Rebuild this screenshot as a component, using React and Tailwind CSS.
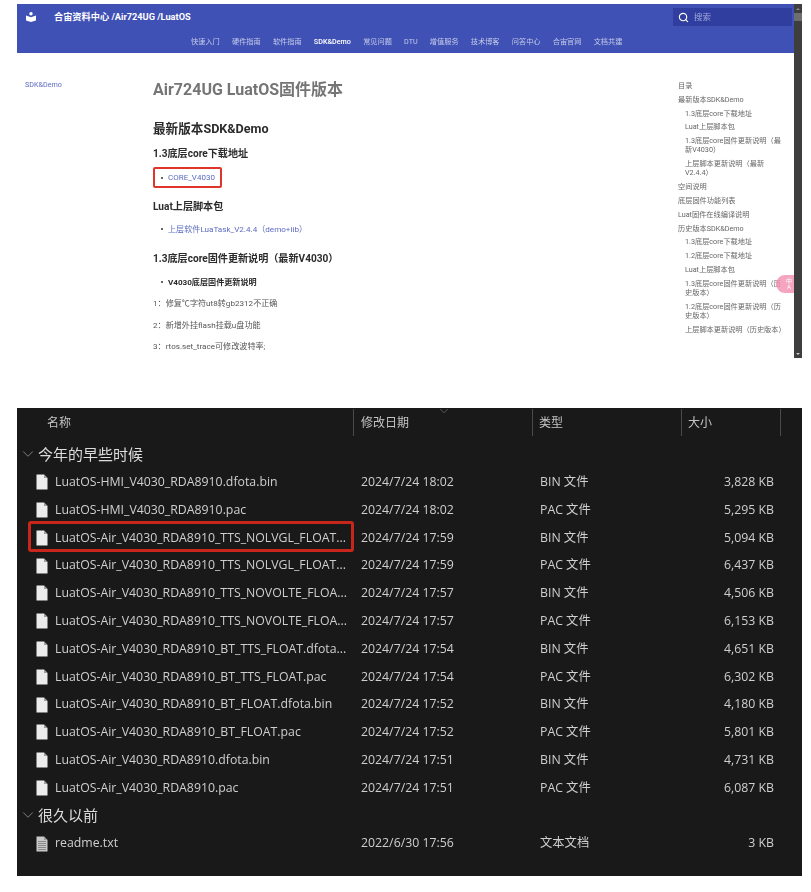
import React from 'react';
import { Search, ChevronDown } from 'lucide-react';

const webFont = "font-['Roboto','Noto_Sans_CJK_SC',sans-serif]";
const fileFont = "font-['Open_Sans','Noto_Sans_CJK_SC',sans-serif]";

const navItems = ['快速入门', '硬件指南', '软件指南', 'SDK&Demo', '常见问题', 'DTU', '增值服务', '技术博客', '问答中心', '合宙官网', '文档共建'];

const tocItems = [
  { text: '目录' },
  { text: '最新版本SDK&Demo' },
  { text: '1.3底层core下载地址', sub: true },
  { text: 'Luat上层脚本包', sub: true },
  { text: '1.3底层core固件更新说明（最新V4030）', sub: true },
  { text: '上层脚本更新说明（最新V2.4.4）', sub: true },
  { text: '空间说明' },
  { text: '底层固件功能列表' },
  { text: 'Luat固件在线编译说明' },
  { text: '历史版本SDK&Demo' },
  { text: '1.3底层core下载地址', sub: true },
  { text: '1.2底层core下载地址', sub: true },
  { text: 'Luat上层脚本包', sub: true },
  { text: '1.3底层core固件更新说明（历史版本）', sub: true },
  { text: '1.2底层core固件更新说明（历史版本）', sub: true },
  { text: '上层脚本更新说明（历史版本）', sub: true },
];

const recentFiles = [
  ['LuatOS-HMI_V4030_RDA8910.dfota.bin', '2024/7/24 18:02', 'BIN 文件', '3,828 KB'],
  ['LuatOS-HMI_V4030_RDA8910.pac', '2024/7/24 18:02', 'PAC 文件', '5,295 KB'],
  ['LuatOS-Air_V4030_RDA8910_TTS_NOLVGL_FLOAT...', '2024/7/24 17:59', 'BIN 文件', '5,094 KB', true],
  ['LuatOS-Air_V4030_RDA8910_TTS_NOLVGL_FLOAT...', '2024/7/24 17:59', 'PAC 文件', '6,437 KB'],
  ['LuatOS-Air_V4030_RDA8910_TTS_NOVOLTE_FLOA...', '2024/7/24 17:57', 'BIN 文件', '4,506 KB'],
  ['LuatOS-Air_V4030_RDA8910_TTS_NOVOLTE_FLOA...', '2024/7/24 17:57', 'PAC 文件', '6,153 KB'],
  ['LuatOS-Air_V4030_RDA8910_BT_TTS_FLOAT.dfota...', '2024/7/24 17:54', 'BIN 文件', '4,651 KB'],
  ['LuatOS-Air_V4030_RDA8910_BT_TTS_FLOAT.pac', '2024/7/24 17:54', 'PAC 文件', '6,302 KB'],
  ['LuatOS-Air_V4030_RDA8910_BT_FLOAT.dfota.bin', '2024/7/24 17:52', 'BIN 文件', '4,180 KB'],
  ['LuatOS-Air_V4030_RDA8910_BT_FLOAT.pac', '2024/7/24 17:52', 'PAC 文件', '5,801 KB'],
  ['LuatOS-Air_V4030_RDA8910.dfota.bin', '2024/7/24 17:51', 'BIN 文件', '4,731 KB'],
  ['LuatOS-Air_V4030_RDA8910.pac', '2024/7/24 17:51', 'PAC 文件', '6,087 KB'],
];

const FileIcon = ({ lines }) => (
  <svg width="12" height="16" viewBox="0 0 12 16" className="shrink-0">
    <path d="M0.5 0.5H8L11.5 4V15.5H0.5Z" fill={lines ? '#c9c9c9' : '#ececec'} />
    <path d="M8 0.5V4H11.5Z" fill="#9a9a9a" />
    {lines && <path d="M2 5.5H10M2 7.5H10M2 9.5H10M2 11.5H10M2 13.5H10" stroke="#777" strokeWidth="0.8" />}
  </svg>
);

const LogoIcon = () => (
  <svg width="10" height="10" viewBox="0 0 10 10">
    <circle cx="5" cy="1.8" r="1.7" fill="#fff" />
    <path d="M0 3.4L5 5.2L10 3.4V8.4L5 10L0 8.4Z" fill="#fff" />
  </svg>
);

const FileRow = ({ file }) => (
  <div className="relative flex items-center h-[27.8px] pt-[1px]">
    <div className="flex items-center gap-[7px] w-[344px] pl-[19px]">
      <FileIcon lines={file[0].endsWith('.txt')} />
      <span className="whitespace-nowrap">{file[0]}</span>
    </div>
    <span className="w-[179px] whitespace-nowrap">{file[1]}</span>
    <span className="w-[100px] whitespace-nowrap">{file[2]}</span>
    <span className="w-[134px] text-right whitespace-nowrap">{file[3]}</span>
    {file[4] && (
      <div className="absolute left-[11px] top-[-2.4px] w-[326px] h-[31px] border-[3px] border-[#c9261b] rounded-[3px]" />
    )}
  </div>
);

const GroupTitle = ({ children }) => (
  <div className="flex items-center h-[27.8px] pl-[2px] gap-[1px] text-[15px] text-[#dcdcdc]">
    <ChevronDown size={18} strokeWidth={1} className="text-[#a0a0a0]" />
    <span>{children}</span>
  </div>
);

export default function App() {
  return (
    <div className="min-h-[892px] bg-white pl-[17px] pr-[9px] pt-[4px]">
      {/* browser part */}
      <div className={`flex h-[354px] blur-[0.3px] ${webFont}`}>
        <div className="relative flex-1 flex flex-col min-w-0">
          <header className="h-[49px] bg-[#3f51b5] shrink-0 text-white">
            <div className="flex items-center h-[24px] pl-[9px] pr-[2px] pt-[1px]">
              <LogoIcon />
              <span className="ml-[18px] text-[9.2px] font-bold">合宙资料中心 /Air724UG /LuatOS</span>
              <div className="ml-auto mt-[1px] flex items-center gap-[5px] w-[119px] h-[18px] pl-[5px] bg-[#303f9f] text-[8.5px] text-[#9fa8da]">
                <Search size={11} strokeWidth={2.5} className="text-white" />
                <span>搜索</span>
              </div>
            </div>
            <nav className="flex gap-[12.2px] pl-[174px] pt-[9px] text-[7.2px] text-[#c5cae9]">
              {navItems.map((item) => (
                <span key={item} className={item === 'SDK&Demo' ? 'text-white font-medium' : ''}>{item}</span>
              ))}
            </nav>
          </header>

          <div className="flex flex-1 min-h-0">
            <aside className="w-[136px] shrink-0 pl-[8px] pt-[27px] text-[7.2px] text-[#5c6bc0]">SDK&Demo</aside>

            <main className="flex-1 min-w-0 pt-[26px]">
              <h1 className="text-[16px] leading-[22px] font-bold text-[#757575]">Air724UG LuatOS固件版本</h1>
              <h2 className="mt-[20px] text-[12.6px] leading-[16px] font-bold text-[#2b2b2b]">最新版本SDK&Demo</h2>
              <h3 className="mt-[10px] text-[10.1px] leading-[14px] font-bold text-[#2b2b2b]">1.3底层core下载地址</h3>
              <div className="mt-[6px] w-[69px] h-[21px] flex items-center pl-[6px] gap-[5px] border-2 border-[#e0352b] rounded-[2px] text-[8px] text-[#5c6bc0]">
                <span className="w-[2px] h-[2px] rounded-full bg-[#333] shrink-0" />
                CORE_V4030
              </div>
              <h3 className="mt-[12px] text-[10.1px] leading-[14px] font-bold text-[#2b2b2b]">Luat上层脚本包</h3>
              <div className="mt-[9px] flex items-center pl-[8px] gap-[5px] h-[12px] text-[8.1px] text-[#5c6bc0]">
                <span className="w-[2px] h-[2px] rounded-full bg-[#333] shrink-0" />
                上层软件LuaTask_V2.4.4（demo+lib）
              </div>
              <h3 className="mt-[17px] text-[10.1px] leading-[14px] font-bold text-[#2b2b2b]">1.3底层core固件更新说明（最新V4030）</h3>
              <div className="mt-[10px] flex items-center pl-[8px] gap-[5px] h-[12px] text-[8.1px] font-bold text-[#2b2b2b]">
                <span className="w-[2px] h-[2px] rounded-full bg-[#333] shrink-0" />
                V4030底层固件更新说明
              </div>
              <div className="mt-[9px] flex flex-col gap-[9.5px] text-[8.1px] leading-[12px] text-[#555]">
                <p>1：修复℃字符ut8转gb2312不正确</p>
                <p>2：新增外挂flash挂载u盘功能</p>
                <p>3：rtos.set_trace可修改波特率;</p>
              </div>
            </main>

            <aside className="w-[116px] shrink-0 pt-[28px] pr-[9px] text-[7.2px] leading-[9.2px] text-[#666]">
              {tocItems.map((item, i) => (
                <div key={i} className={`pb-[4.6px] ${item.sub ? 'pl-[7px]' : ''}`}>{item.text}</div>
              ))}
            </aside>
          </div>

          {/* floating translate bubble */}
          <div className="absolute right-0 top-[271px] w-[18px] h-[18px] rounded-l-full bg-[#f48fb1]/80 flex items-center justify-end pr-[2px] text-[6px] leading-[6px] text-white text-center">
            中<br />A
          </div>
        </div>

        {/* scrollbar */}
        <div className="w-[8px] shrink-0 bg-[#3e3e3e] flex flex-col items-center">
          <div className="mt-[4px] w-0 h-0 border-x-[2px] border-x-transparent border-b-[2px] border-b-[#8a8a8a]" />
          <div className="mt-[3px] w-full h-[8px] bg-[#6e6e6e]" />
          <div className="mt-auto mb-[3px] w-0 h-0 border-x-[2px] border-x-transparent border-t-[2px] border-t-[#d0d0d0]" />
        </div>
      </div>

      {/* explorer part */}
      <div className={`mt-[50px] h-[468px] bg-[#191919] text-[12.3px] text-[#cfcfcf] blur-[0.25px] ${fileFont}`}>
        <div className="relative flex h-[28px] pt-[1px] text-[12px] text-[#c4c4c4] overflow-hidden">
          <div className="w-[337px] pl-[30px] border-r border-[#4a4a4a] leading-[27px]">名称</div>
          <div className="w-[179px] pl-[7px] border-r border-[#4a4a4a] leading-[27px]">修改日期</div>
          <div className="w-[149px] pl-[6px] border-r border-[#4a4a4a] leading-[27px]">类型</div>
          <div className="w-[99px] pl-[6px] border-r border-[#4a4a4a] leading-[27px]">大小</div>
          <ChevronDown size={14} strokeWidth={1} className="absolute left-[419.5px] top-[-4.5px] text-[#8a8a8a]" />
        </div>
        <div className="pt-[4px]">
          <GroupTitle>今年的早些时候</GroupTitle>
          {recentFiles.map((file, i) => <FileRow key={i} file={file} />)}
          <GroupTitle>很久以前</GroupTitle>
          <FileRow file={['readme.txt', '2022/6/30 17:56', '文本文档', '3 KB']} />
        </div>
      </div>
    </div>
  );
}
